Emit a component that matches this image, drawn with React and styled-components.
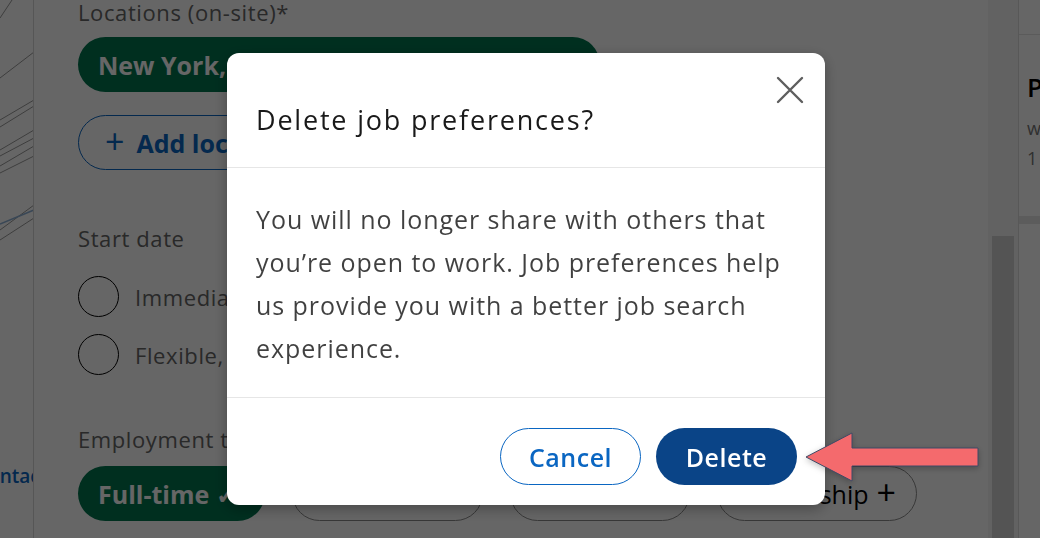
import React from "react";
import styled, { createGlobalStyle } from "styled-components";

const GlobalStyle = createGlobalStyle`
  html, body {
    margin: 0;
    padding: 0;
    width: 1040px;
    height: 538px;
    overflow: hidden;
    background: #ffffff;
    font-family: "Open Sans", "Noto Sans", sans-serif;
  }
  * { box-sizing: border-box; }
`;

const Page = styled.div`
  display: flex;
  height: 538px;
  width: 1040px;
`;

const LeftStrip = styled.div`
  width: 34px;
  flex-shrink: 0;
  border-right: 1px solid #d6d6d6;
  overflow: hidden;
  display: flex;
  flex-direction: column;
`;

const SideLink = styled.span`
  margin-top: 203px;
  margin-left: -24px;
  white-space: nowrap;
  font-size: 19px;
  font-weight: 600;
  color: #0a66c2;
`;

const Main = styled.div`
  flex: 1;
  padding-left: 44px;
  display: flex;
  flex-direction: column;
  overflow: hidden;
`;

const FieldLabel = styled.div`
  font-size: 22px;
  letter-spacing: 0.6px;
  line-height: 24px;
  color: #666666;
  margin-top: ${(p) => p.$top || 0}px;
  white-space: nowrap;
`;

const Pill = styled.div`
  display: flex;
  align-items: center;
  gap: ${(p) => (p.$variant === "blue" ? 12 : 8)}px;
  height: 55px;
  flex-shrink: 0;
  width: ${(p) => p.$width}px;
  margin-top: ${(p) => p.$top || 0}px;
  padding: 0 20px 0 ${(p) => (p.$variant === "blue" ? 26 : 20)}px;
  border-radius: 28px;
  font-size: 25px;
  white-space: nowrap;
  overflow: hidden;
  background: ${(p) => (p.$variant === "green" ? "#01754f" : "#ffffff")};
  color: ${(p) =>
    p.$variant === "green" ? "#ffffff" : p.$variant === "blue" ? "#0a66c2" : "#000000"};
  font-weight: ${(p) => (p.$variant === "plain" ? 400 : 700)};
  justify-content: ${(p) => (p.$variant === "plain" ? "flex-end" : "flex-start")};
  border: ${(p) =>
    p.$variant === "green"
      ? "none"
      : p.$variant === "blue"
      ? "1.5px solid #0a66c2"
      : "1.5px solid #8c8c8c"};
`;

const PlusMark = styled.span`
  font-size: 34px;
  font-weight: 400;
  line-height: 1;
  margin-top: -3px;
`;

const PillRow = styled.div`
  display: flex;
  gap: 27px;
  margin-top: 15px;
`;

const RadioRow = styled.label`
  display: flex;
  align-items: center;
  gap: 16px;
  margin-top: ${(p) => p.$top}px;
  font-size: 22px;
  letter-spacing: 0.6px;
  color: #666666;
  white-space: nowrap;
`;

const RadioCircle = styled.span`
  width: 41px;
  height: 41px;
  border-radius: 50%;
  border: 1.5px solid #000000;
  flex-shrink: 0;
`;

const ScrollTrack = styled.div`
  width: 30px;
  flex-shrink: 0;
  background: #f5f5f5;
  padding: 236px 4px 0;
`;

const ScrollThumb = styled.div`
  height: 100%;
  background: #d2d2d2;
`;

const RightPanel = styled.div`
  width: 22px;
  flex-shrink: 0;
  border-left: 1px solid #dcdcdc;
  overflow: hidden;
  display: flex;
  flex-direction: column;
`;

const RightTop = styled.div`
  height: 35px;
  border-bottom: 1px solid #e4e4e4;
`;

const RightCard = styled.div`
  padding: 34px 0 0 8px;
  height: 181px;
  white-space: nowrap;
`;

const RightTitle = styled.div`
  font-size: 26px;
  font-weight: 600;
  color: #000;
  line-height: 36px;
`;

const RightSub = styled.div`
  font-size: 18px;
  color: #777;
  line-height: 30px;
  margin-top: ${(p) => p.$top || 0}px;
`;

const RightGap = styled.div`
  height: 8px;
  background: #e6e6e6;
`;

const Overlay = styled.div`
  position: fixed;
  inset: 0;
  background: rgba(0, 0, 0, 0.6);
`;

const Modal = styled.div`
  position: fixed;
  left: 227px;
  top: 53px;
  width: 598px;
  height: 452px;
  background: #ffffff;
  border-radius: 12px;
  box-shadow: 0 4px 14px rgba(0, 0, 0, 0.3);
  display: flex;
  flex-direction: column;
  overflow: hidden;
`;

const Header = styled.div`
  height: 115px;
  flex-shrink: 0;
  display: flex;
  align-items: flex-start;
  justify-content: space-between;
  padding: 0 20px 0 29px;
  border-bottom: 1px solid #e6e6e6;
`;

const Title = styled.h2`
  margin: 50px 0 0;
  font-size: 27px;
  letter-spacing: 1.8px;
  line-height: 34px;
  font-weight: 400;
  color: rgba(0, 0, 0, 0.9);
`;

const CloseButton = styled.button`
  margin-top: 22px;
  width: 30px;
  height: 30px;
  padding: 0;
  border: none;
  background: none;
  display: flex;
  align-items: center;
  justify-content: center;
  color: #5e5e5e;
`;

const Body = styled.p`
  margin: 0;
  padding: 30px 20px 27px 29px;
  font-size: 25px;
  letter-spacing: 0.95px;
  line-height: 43px;
  color: rgba(0, 0, 0, 0.75);
`;

const Footer = styled.div`
  flex: 1;
  border-top: 1px solid #e6e6e6;
  display: flex;
  align-items: flex-start;
  justify-content: flex-end;
  gap: 15px;
  padding: 30px 28px 0 0;
`;

const Button = styled.button`
  width: 141px;
  height: 57px;
  border-radius: 29px;
  font-family: inherit;
  font-size: 25px;
  letter-spacing: 0.5px;
  font-weight: 600;
  cursor: pointer;
  background: ${(p) => (p.$primary ? "#0a4487" : "#ffffff")};
  color: ${(p) => (p.$primary ? "#ffffff" : "#0a66c2")};
  border: ${(p) => (p.$primary ? "none" : "1.5px solid #0a66c2")};
`;

const Arrow = styled.svg`
  position: fixed;
  left: 800px;
  top: 426px;
  filter: drop-shadow(0 2px 3px rgba(0, 0, 0, 0.25));
`;

const Sketch = () => (
  <svg width="34" height="260" viewBox="0 0 34 260">
    <g stroke="#9a9a9a" strokeWidth="1" fill="none">
      <line x1="0" y1="18" x2="12" y2="0" />
      <line x1="0" y1="78" x2="34" y2="52" />
      <line x1="0" y1="120" x2="34" y2="100" />
      <line x1="0" y1="127" x2="34" y2="106" />
      <line x1="0" y1="150" x2="34" y2="130" />
      <line x1="0" y1="156" x2="34" y2="138" />
      <line x1="0" y1="166" x2="34" y2="146" />
      <line x1="0" y1="173" x2="34" y2="156" />
      <line x1="0" y1="230" x2="34" y2="205" />
      <line x1="0" y1="240" x2="34" y2="218" />
    </g>
    <line x1="0" y1="224" x2="34" y2="210" stroke="#8fb1d6" strokeWidth="1.5" />
  </svg>
);

export default function App() {
  return (
    <>
      <GlobalStyle />
      <Page>
        <LeftStrip>
          <Sketch />
          <SideLink>Contact info</SideLink>
        </LeftStrip>
        <Main>
          <FieldLabel>Locations (on-site)*</FieldLabel>
          <Pill $variant="green" $width={522} $top={13}>
            New York, New York, United States ✓
          </Pill>
          <Pill $variant="blue" $width={220} $top={23}>
            <PlusMark>+</PlusMark> Add location
          </Pill>
          <FieldLabel $top={56}>Start date</FieldLabel>
          <RadioRow $top={26}>
            <RadioCircle />
            Immediately, I'm actively applying
          </RadioRow>
          <RadioRow $top={17}>
            <RadioCircle />
            Flexible, I'm casually browsing
          </RadioRow>
          <FieldLabel $top={52}>Employment type</FieldLabel>
          <PillRow>
            <Pill $variant="green" $width={187}>Full-time ✓</Pill>
            <Pill $variant="plain" $width={191}>
              Part-time <PlusMark>+</PlusMark>
            </Pill>
            <Pill $variant="plain" $width={180}>
              Contract <PlusMark>+</PlusMark>
            </Pill>
            <Pill $variant="plain" $width={200}>
              Internship <PlusMark>+</PlusMark>
            </Pill>
          </PillRow>
        </Main>
        <ScrollTrack>
          <ScrollThumb />
        </ScrollTrack>
        <RightPanel>
          <RightTop />
          <RightCard>
            <RightTitle>Profile</RightTitle>
            <RightSub $top={8}>www</RightSub>
            <RightSub>1</RightSub>
          </RightCard>
          <RightGap />
        </RightPanel>
      </Page>
      <Overlay />
      <Modal role="dialog" aria-labelledby="dlg-title">
        <Header>
          <Title id="dlg-title">Delete job preferences?</Title>
          <CloseButton aria-label="Dismiss">
            <svg width="28" height="28" viewBox="0 0 28 28">
              <path
                d="M2 2 L26 26 M26 2 L2 26"
                stroke="currentColor"
                strokeWidth="2.4"
                strokeLinecap="round"
              />
            </svg>
          </CloseButton>
        </Header>
        <Body>
          You will no longer share with others that you’re open to work. Job
          preferences help us provide you with a better job search experience.
        </Body>
        <Footer>
          <Button>Cancel</Button>
          <Button $primary>Delete</Button>
        </Footer>
      </Modal>
      <Arrow width="185" height="62" viewBox="0 0 185 62">
        <polygon
          points="6,31 52,7 52,22 178,22 178,40 52,40 52,55"
          fill="#f46a6d"
          stroke="#3e4a66"
          strokeWidth="1"
          strokeLinejoin="miter"
        />
      </Arrow>
    </>
  );
}
